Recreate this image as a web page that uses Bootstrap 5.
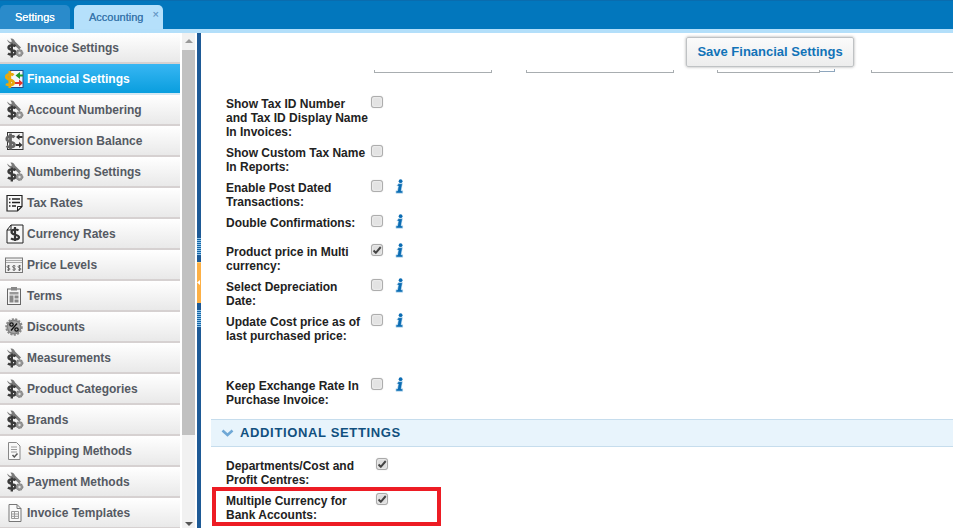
<!DOCTYPE html>
<html lang="en">
<head>
<meta charset="utf-8">
<title>Financial Settings</title>
<link href="https://cdn.jsdelivr.net/npm/bootstrap@5.3.0/dist/css/bootstrap.min.css" rel="stylesheet">
<style>
html,body{height:528px;overflow:hidden;background:#fff}
body{font-family:"Liberation Sans",Arial,sans-serif;font-size:12px;line-height:14px;color:#222}
.topstrip{height:33px;background:#0277bd;border-top:1px solid #0a6cae;border-bottom:4px solid #b3dffa;padding:4px 0 0 0}
.tabitem{height:24px;border-radius:5px 5px 0 0;font-size:11px;font-weight:400;line-height:25px;position:relative;text-shadow:0 0 .6px currentColor}
.tab-settings{width:70px;background:#2a8bcb;color:#fff;padding-left:15px}
.tab-account{width:89px;margin-left:4px;background:#b5e0fb;color:#3b78ad;padding-left:15px}
.tab-x{position:absolute;right:4px;top:-3px;font-size:11px;color:#6a9cc8}
.workarea{height:495px}
.sidepane{width:197px;flex:none}
.sidelist{width:180px}
.sideitem{height:31px;display:flex;align-items:center;border-bottom:2px solid #d6d1d1;background:linear-gradient(#fff,#e9e9e9);color:#555a63;font-weight:700;padding-left:4px;padding-top:1px;text-decoration:none}
.sideitem svg{width:20px;height:20px;margin-right:3px;margin-top:-1px;flex:none}
.sideitem svg.icon-ship{margin-right:4px}
.sideitem.current{background:linear-gradient(#38b6f3,#099ede);color:#fff;border-bottom-color:#d6e8f2}
.scrolltrack{width:13px;margin-left:2px;background:#f1f1f1;padding-top:17px;position:relative}
.scrollthumb{height:385px;background:#c1c1c1}
.arrow-up,.arrow-down{position:absolute;left:3px;width:0;height:0;border-left:4px solid transparent;border-right:4px solid transparent}
.arrow-up{top:6px;border-bottom:4px solid #999}
.arrow-down{bottom:2px;border-top:4px solid #555}
.splitter{width:4px;background:#1e5a96;flex:none;position:relative}
.split-grip{position:absolute;left:0;width:4px;height:17px;background:repeating-linear-gradient(#8dc2e8 0 1px,#1565a5 1px 2px)}
.grip-a{top:205px}
.grip-b{top:277px}
.split-handle{position:absolute;left:0;top:229px;width:4px;height:41px;background:#fdb045;border-top:1px solid #ffd27f}
.split-handle::after{content:"";position:absolute;left:0;top:17px;width:3px;height:5px;background:#fff;clip-path:polygon(100% 0,0 50%,100% 100%)}
.mainpane{position:relative;overflow:hidden}
.stubrow{height:40px;padding-top:37px}
.stub{height:3px;border:1px solid #a8adb0;border-top:0;flex:none}
.stub-a{width:118px;margin-left:173px}
.stub-b{width:148px;margin-left:34px}
.stub-c{width:103px;margin-left:43px}
.stub-d{width:15px;margin-top:-1px;border-color:#8ea6bd;border-left:0}
.stub-e{width:90px;margin-left:36px}
.savebtn{position:absolute;left:485px;top:4px;width:168px;height:30px;padding:0;font-size:13px;line-height:28px;font-weight:700;color:#1173b8;background:linear-gradient(#fbfbfb,#ededed);border:1px solid #bfc2c4;border-radius:2px;box-shadow:0 0 3px rgba(0,0,0,.35)}
.setrows{padding:24px 0 0 25px}
.setrow{min-height:22px;margin-bottom:7px}
.row-tall{min-height:57px}
.lastrow{margin-bottom:12px}
.setlabel{width:145px;padding-right:2px;font-weight:700;flex:none}
.setlabel-wide{width:150px}
.form-check-input.tick{width:12px;height:12px;margin:-1px 0 0;flex:none;float:none;border:1px solid #adadad;border-radius:3px;background-color:#e3e3e3;box-shadow:0 0 1px rgba(0,0,0,.25),inset 0 0 2px #fff}
.form-check-input.tick:checked{background-color:#dedede;border-color:#a9a9a9;background-image:url("data:image/svg+xml,%3Csvg xmlns='http://www.w3.org/2000/svg' viewBox='0 0 12 12'%3E%3Cpath d='M2.5 6.5l2.3 2.3L9.8 3' fill='none' stroke='%23444' stroke-width='2'/%3E%3C/svg%3E");background-size:12px 12px}
.infoicon{width:9px;height:15px;margin:-2px 0 0 12px;flex:none}
.sechead{height:28px;margin-left:10px;background:#e8f4fc;border-top:1px solid #c6dded;border-bottom:1px solid #c6dded;display:flex;align-items:center;padding-left:10px;font-size:13px;font-weight:700;letter-spacing:.65px;color:#11507f}
.sechead svg{width:13px;height:8px;margin-right:6px}
.setrows-b{padding:12px 0 0 25px}
.redmark{position:absolute;left:11px;top:454px;width:229px;height:39px;border:4px solid #ed1c24}
</style>
</head>
<body>
<svg width="0" height="0" class="position-absolute">
<defs>
<symbol id="ic-wrench" viewBox="0 0 20 20">
<path d="M3 1.500l3 2.500 2-.5-1.500-3c2.500-.5 4 1 4.500 3l6 6-2 2-6-5.500c-2 .5-5-1-6-4.500z" fill="#7a7a7a"/>
<path d="M11.500 8.300C10 6.800 4.500 6.800 4.500 9.500c0 3.200 7 1.800 7 5 0 2.700-5.500 2.700-7.500 1M7.800 5.500v14" fill="none" stroke="#3a3a3a" stroke-width="2.400"/>
<circle cx="15.500" cy="15" r="3.400" fill="#949494" stroke="#777" stroke-dasharray="1.500 1"/>
<circle cx="15.500" cy="15" r="1.200" fill="#ddd"/>
</symbol>
<symbol id="ic-fin" viewBox="0 0 20 20">
<rect x="6.500" y="1.500" width="12.500" height="17" fill="#f2f6fc" stroke="#234f8c"/>
<path d="M19 5.500h-3V3l-4.500 3.500 4.500 3.500V7.500h3z" fill="#1f9a2b"/>
<path d="M11 13h4v-2.500l4 3.500-4 3.500V15h-4z" fill="#e2342a"/>
<path d="M9.500 6.200C8 4.700 2.300 4.700 2.300 7.800c0 3.800 7.400 2.400 7.400 5.800 0 3-5.700 3-7.700 1.400M5.800 2v17" fill="none" stroke="#e8a80c" stroke-width="2.800"/>
</symbol>
<symbol id="ic-conv" viewBox="0 0 20 20">
<rect x="3.500" y="1.500" width="15.500" height="17" fill="#f4f4f4" stroke="#333"/>
<path d="M18.500 5h-3V3L12 6l3.500 3V7h3zM12 13h3v-2l3.500 3-3.500 3v-2h-3z" fill="#333"/>
<path d="M10.500 6.200C9 4.700 2.800 4.700 2.800 8c0 3.800 7.700 2.300 7.700 5.600 0 3-6 3-8 1.400M6.500 2.500v16" fill="none" stroke="#666" stroke-width="2.800"/>
</symbol>
<symbol id="ic-tax" viewBox="0 0 20 20">
<path d="M3 2.500h15v11l-4.500 4.500H3z" fill="#fafafa" stroke="#222" stroke-width="1.200"/>
<path d="M13.500 18v-4.500H18" fill="none" stroke="#222"/>
<path d="M5 6h1.500M8 6h8M5 9.500h1.500M8 9.500h8M5 13h1.500M8 13h4" stroke="#222" stroke-width="1.400"/>
</symbol>
<symbol id="ic-cur" viewBox="0 0 20 20">
<path d="M7 1h12v18H3V6z" fill="#f7f7f7" stroke="#222"/>
<path d="M3 6h4V1" fill="none" stroke="#222"/>
<path d="M14.500 6.500C13 5 7.500 5 7.500 8c0 3.500 7.500 2 7.500 5.200 0 2.800-6 2.800-8 1.200M11 3v14" fill="none" stroke="#333" stroke-width="2.200"/>
</symbol>
<symbol id="ic-price" viewBox="0 0 20 20">
<rect x="1.500" y="3" width="17" height="14.500" fill="#f2f2f2" stroke="#777"/>
<path d="M2 5.500h16M2 7.500h16" stroke="#aaa"/>
<path d="M6 11.200c-.8-.8-3-.8-3 .6s3 .8 3 2.200-2.200 1.300-3 .7M4.500 10v6M11.500 11.200c-.8-.8-3-.8-3 .6s3 .8 3 2.200-2.200 1.300-3 .7M10 10v6M17 11.200c-.8-.8-3-.8-3 .6s3 .8 3 2.200-2.200 1.300-3 .7M15.500 10v6" fill="none" stroke="#555" stroke-width=".8"/>
</symbol>
<symbol id="ic-terms" viewBox="0 0 20 20">
<rect x="3.500" y="3" width="13" height="15.500" fill="#f5f5f5" stroke="#666"/>
<rect x="7" y="1" width="6" height="3.500" fill="#888"/>
<rect x="5.500" y="6" width="9" height="2.500" fill="#999"/>
<rect x="5.500" y="9.500" width="4" height="7" fill="#888"/>
<rect x="10.500" y="9.500" width="4" height="3" fill="#888"/>
<rect x="10.500" y="13.500" width="4" height="3" fill="#888"/>
</symbol>
<symbol id="ic-disc" viewBox="0 0 20 20">
<circle cx="10" cy="10" r="7.500" fill="#808080" stroke="#888" stroke-width="2.500" stroke-dasharray="2 1.300"/>
<circle cx="10" cy="10" r="6" fill="#a6a6a6"/>
<circle cx="7.500" cy="7.500" r="1.700" fill="none" stroke="#111" stroke-width="1.300"/>
<circle cx="12.500" cy="12.500" r="1.700" fill="none" stroke="#111" stroke-width="1.300"/>
<path d="M13 6.500l-6 7" stroke="#111" stroke-width="1.300"/>
</symbol>
<symbol id="ic-ship" viewBox="0 0 20 20">
<path d="M4.500 1.500h8l3.500 3.500v13.500H4.500z" fill="#f8f8f8" stroke="#888"/>
<path d="M7 6h6M7 8.500h6M7 11h6" stroke="#9a9a9a"/>
<path d="M8.500 14l1.800 2 3.200-3.500" fill="none" stroke="#555" stroke-width="1.500"/>
</symbol>
<symbol id="ic-tmpl" viewBox="0 0 20 20">
<path d="M5 1.500h8l4 4v13H5z" fill="#fafafa" stroke="#777"/>
<path d="M13 1.500v4h4" fill="none" stroke="#777"/>
<path d="M7.500 8.500h7v7h-7zM7.500 11h7M7.500 13.300h7M10.500 8.500v7" fill="none" stroke="#999"/>
</symbol>
<symbol id="ic-info" viewBox="0 0 9 15">
<path d="M3.500 4.600h4l-1.300 7.200h1.600v2.400H.9v-2.400h1.600l.8-4.800H1.700z" fill="#0b6cb3" stroke="#d8ecf8" stroke-width=".6"/>
<circle cx="5.600" cy="2.200" r="1.900" fill="#0b6cb3"/>
</symbol>
</defs>
</svg>

<div class="topstrip d-flex">
  <div class="tabitem tab-settings">Settings</div>
  <div class="tabitem tab-account">Accounting<span class="tab-x">×</span></div>
</div>

<div class="workarea d-flex">
  <div class="sidepane d-flex">
    <div class="sidelist">
      <a class="sideitem" href="#"><svg><use href="#ic-wrench"/></svg>Invoice Settings</a>
      <a class="sideitem current" href="#"><svg><use href="#ic-fin"/></svg>Financial Settings</a>
      <a class="sideitem" href="#"><svg><use href="#ic-wrench"/></svg>Account Numbering</a>
      <a class="sideitem" href="#"><svg><use href="#ic-conv"/></svg>Conversion Balance</a>
      <a class="sideitem" href="#"><svg><use href="#ic-wrench"/></svg>Numbering Settings</a>
      <a class="sideitem" href="#"><svg><use href="#ic-tax"/></svg>Tax Rates</a>
      <a class="sideitem" href="#"><svg><use href="#ic-cur"/></svg>Currency Rates</a>
      <a class="sideitem" href="#"><svg><use href="#ic-price"/></svg>Price Levels</a>
      <a class="sideitem" href="#"><svg><use href="#ic-terms"/></svg>Terms</a>
      <a class="sideitem" href="#"><svg><use href="#ic-disc"/></svg>Discounts</a>
      <a class="sideitem" href="#"><svg><use href="#ic-wrench"/></svg>Measurements</a>
      <a class="sideitem" href="#"><svg><use href="#ic-wrench"/></svg>Product Categories</a>
      <a class="sideitem" href="#"><svg><use href="#ic-wrench"/></svg>Brands</a>
      <a class="sideitem" href="#"><svg class="icon-ship"><use href="#ic-ship"/></svg>Shipping Methods</a>
      <a class="sideitem" href="#"><svg><use href="#ic-wrench"/></svg>Payment Methods</a>
      <a class="sideitem" href="#"><svg><use href="#ic-tmpl"/></svg>Invoice Templates</a>
    </div>
    <div class="scrolltrack">
      <span class="arrow-up"></span>
      <div class="scrollthumb"></div>
      <span class="arrow-down"></span>
    </div>
  </div>
  <div class="splitter">
    <span class="split-grip grip-a"></span>
    <span class="split-handle"></span>
    <span class="split-grip grip-b"></span>
  </div>
  <div class="mainpane flex-grow-1">
    <div class="stubrow d-flex">
      <div class="stub stub-a"></div>
      <div class="stub stub-b"></div>
      <div class="stub stub-c"></div>
      <div class="stub stub-d"></div>
      <div class="stub stub-e"></div>
    </div>
    <button class="btn savebtn" type="button">Save Financial Settings</button>

    <div class="setrows">
      <div class="setrow d-flex"><div class="setlabel">Show Tax ID Number and Tax ID Display Name In Invoices:</div><input class="form-check-input tick" type="checkbox"></div>
      <div class="setrow d-flex"><div class="setlabel">Show Custom Tax Name In Reports:</div><input class="form-check-input tick" type="checkbox"></div>
      <div class="setrow d-flex"><div class="setlabel">Enable Post Dated Transactions:</div><input class="form-check-input tick" type="checkbox"><svg class="infoicon"><use href="#ic-info"/></svg></div>
      <div class="setrow d-flex"><div class="setlabel">Double Confirmations:</div><input class="form-check-input tick" type="checkbox"><svg class="infoicon"><use href="#ic-info"/></svg></div>
      <div class="setrow d-flex"><div class="setlabel">Product price in Multi currency:</div><input class="form-check-input tick" type="checkbox" checked><svg class="infoicon"><use href="#ic-info"/></svg></div>
      <div class="setrow d-flex"><div class="setlabel">Select Depreciation Date:</div><input class="form-check-input tick" type="checkbox"><svg class="infoicon"><use href="#ic-info"/></svg></div>
      <div class="setrow row-tall d-flex"><div class="setlabel">Update Cost price as of last purchased price:</div><input class="form-check-input tick" type="checkbox"><svg class="infoicon"><use href="#ic-info"/></svg></div>
      <div class="setrow lastrow d-flex"><div class="setlabel">Keep Exchange Rate In Purchase Invoice:</div><input class="form-check-input tick" type="checkbox"><svg class="infoicon"><use href="#ic-info"/></svg></div>
    </div>

    <div class="sechead"><svg viewBox="0 0 13 8"><path d="M1.500 1.500l5 4.500 5-4.500" fill="none" stroke="#6fa8d6" stroke-width="2.600"/></svg>ADDITIONAL SETTINGS</div>

    <div class="setrows-b">
      <div class="setrow d-flex"><div class="setlabel setlabel-wide">Departments/Cost and Profit Centres:</div><input class="form-check-input tick" type="checkbox" checked></div>
      <div class="setrow d-flex"><div class="setlabel setlabel-wide">Multiple Currency for Bank Accounts:</div><input class="form-check-input tick" type="checkbox" checked></div>
    </div>
    <div class="redmark"></div>
  </div>
</div>
<script src="https://cdn.jsdelivr.net/npm/bootstrap@5.3.0/dist/js/bootstrap.bundle.min.js"></script>
</body>
</html>
